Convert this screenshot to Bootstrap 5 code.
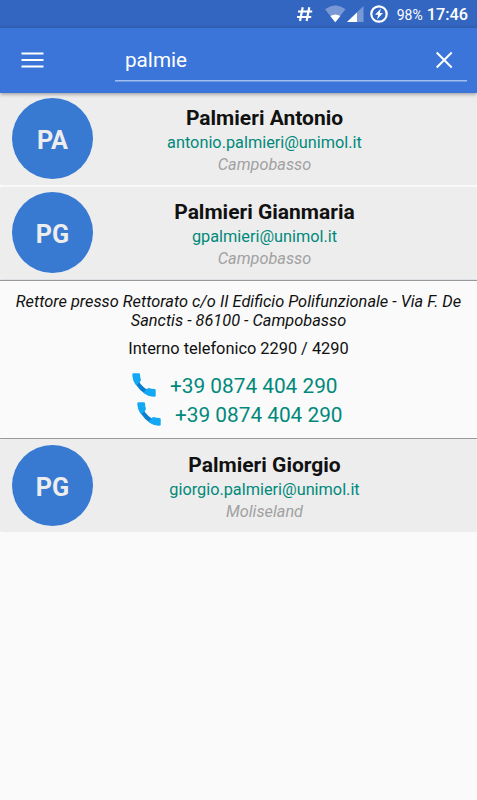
<!DOCTYPE html>
<html lang="it">
<head>
<meta charset="utf-8">
<meta name="viewport" content="width=device-width, initial-scale=1">
<title>Rubrica</title>
<link href="https://cdn.jsdelivr.net/npm/bootstrap@5.3.0/dist/css/bootstrap.min.css" rel="stylesheet">
<style>
body{font-family:Roboto,"Liberation Sans",sans-serif;background:#fafafa;color:#111;min-height:800px;overflow:hidden}
svg{display:block;flex:none}
a{color:#00897b;text-decoration:none}
.status{height:28px;background:#3366c0;color:#fff;padding-right:9px}
.status .pct{font-size:14px;line-height:28px;margin:1px 4px 0 8px}
.status .clock{font-size:16.3px;font-weight:500;line-height:28px;margin-top:1px}
.appbar{height:65px;background:#3b75d9;padding:0 10px 0 20px;box-shadow:0 1px 4px rgba(0,0,0,.4);position:relative;z-index:1}
.search{margin-left:71px;height:35px;margin-top:18px;border-bottom:1px solid #a3bff0;box-shadow:0 1px 0 #6f99e4;padding:0 10px;width:352px}
.search input{background:none;border:0;outline:0;color:#fff;font-size:20.7px;line-height:28px;padding:0;min-width:0}
.search svg{margin-right:4px}
.person{height:92px;background:#ededed;padding:5px 41px 0 12px;border-radius:2px}
.person.second{height:93px;margin-top:1px;border-top:1px solid #f8f8f8}
.person.last{height:93px;padding-top:6px}
.avatar{width:81px;height:81px;background:#3879d2;color:#ededed;font-size:25.2px;font-weight:700;padding-top:4px}
.person h2{font-size:21px;line-height:24px;font-weight:700;color:#111;margin:8px 0 2px}
.person .mail{font-size:16.3px;line-height:22px}
.person .place{font-size:16.3px;line-height:22px;color:#a1a1a1;font-style:italic}
.details{height:159px;border-top:1px solid #999;border-bottom:1px solid #999;padding:11px 10px 0;font-size:16.35px;line-height:19px}
.extension{margin:9px 0 14px}
.phone{font-size:20.8px;line-height:29px;padding-left:122px;gap:14px}
.phone + .phone{padding-left:127px}
.phone svg{margin-top:1px}
</style>
</head>
<body>
<div class="status d-flex align-items-center justify-content-end">
  <svg width="92" height="28" viewBox="0 0 92 28">
    <path d="M5.700 7.200 3 21M12.300 7.200 9.600 21M1 11.500h14.200M0 17h14.200" stroke="#fff" stroke-width="2.200" fill="none"/>
    <path d="M28 9.300Q38.300 1.700 48.500 9.300L38.300 22.300Z" fill="#7899d5"/>
    <path d="M33.300 16Q38.300 13 43.300 16L38.300 22.300Z" fill="#fff"/>
    <path d="M66.500 6v16H50Z" fill="#7899d5"/><path d="M60 12.500V22H50Z" fill="#fff"/>
    <circle cx="82" cy="14" r="7.700" fill="none" stroke="#fff" stroke-width="2.200"/>
    <path d="m84 8.500-6 6.200h3.200L80 19.500l6-6.600h-3.200Z" fill="#fff"/>
  </svg>
  <span class="pct">98%</span><span class="clock">17:46</span>
</div>
<header class="appbar d-flex align-items-start">
  <svg width="24" height="64" viewBox="0 0 24 64" stroke="#fff" stroke-width="2"><path d="M1.500 25.500h22M1.500 32h22M1.500 38.500h22"/></svg>
  <div class="search d-flex align-items-start">
    <input class="flex-grow-1" type="text" value="palmie" aria-label="Cerca">
    <svg width="18" height="28" viewBox="0 0 18 28"><path d="m1.700 6.500 15 15m0-15-15 15" stroke="#fff" stroke-width="2"/></svg>
  </div>
</header>
<main>
  <section class="person d-flex align-items-start">
    <div class="avatar rounded-circle d-flex align-items-center justify-content-center flex-shrink-0">PA</div>
    <div class="flex-grow-1 text-center"><h2>Palmieri Antonio</h2><a class="mail d-block" href="#">antonio.palmieri@unimol.it</a><div class="place">Campobasso</div></div>
  </section>
  <section class="person second d-flex align-items-start">
    <div class="avatar rounded-circle d-flex align-items-center justify-content-center flex-shrink-0">PG</div>
    <div class="flex-grow-1 text-center"><h2>Palmieri Gianmaria</h2><a class="mail d-block" href="#">gpalmieri@unimol.it</a><div class="place">Campobasso</div></div>
  </section>
  <div class="border-top"></div>
  <section class="details text-center">
    <div class="fst-italic">Rettore presso Rettorato c/o II Edificio Polifunzionale - Via F. De Sanctis - 86100 - Campobasso</div>
    <div class="extension">Interno telefonico 2290 / 4290</div>
    <div class="phone d-flex"><svg width="24" height="24" viewBox="0 0 24 24"><use href="#ph"/></svg><a href="#">+39 0874 404 290</a></div>
    <div class="phone d-flex"><svg width="24" height="24" viewBox="0 0 24 24"><use href="#ph"/></svg><a href="#">+39 0874 404 290</a></div>
  </section>
  <section class="person last d-flex align-items-start">
    <div class="avatar rounded-circle d-flex align-items-center justify-content-center flex-shrink-0">PG</div>
    <div class="flex-grow-1 text-center"><h2>Palmieri Giorgio</h2><a class="mail d-block" href="#">giorgio.palmieri@unimol.it</a><div class="place">Moliseland</div></div>
  </section>
</main>
<svg width="0" height="0"><defs><g id="ph">
  <path d="M1.500 7Q6.500 18.500 17.500 23L18.500 18.500Q10.500 15 6 7Z" fill="#0b80cf"/>
  <path d="M.300 1.500Q.300.300 1.500.300H6.800Q8 .300 8 1.500Q8 4.500 9 7L8 8.800 4.200 12.500Q.300 7 .300 1.500Z" fill="#12a8f4"/>
  <path d="M11.300 19.800l4-4.300 1.500-.4Q19.500 16 22.500 16q1.200 0 1.200 1.200v5.300q0 1.200-1.200 1.200Q16.500 23.700 11.300 19.800Z" fill="#12a8f4"/>
</g></defs></svg>
<script src="https://cdn.jsdelivr.net/npm/bootstrap@5.3.0/dist/js/bootstrap.bundle.min.js"></script>
</body>
</html>
